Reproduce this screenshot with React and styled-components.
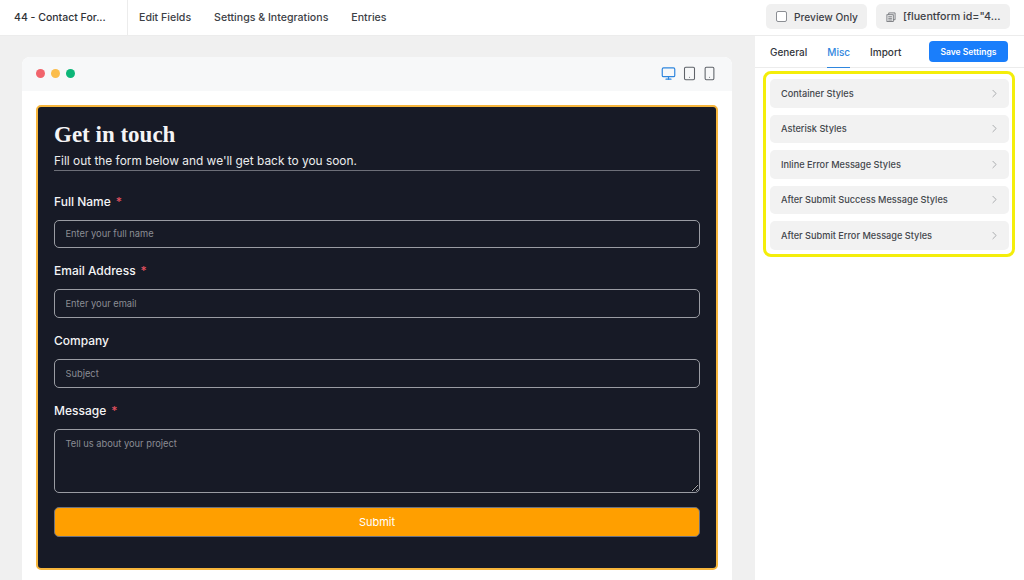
import React from "react";
import styled, { createGlobalStyle } from "styled-components";
import { ChevronRight, Monitor, Tablet, Smartphone } from "lucide-react";

const GlobalStyle = createGlobalStyle`
  html, body {
    margin: 0;
    padding: 0;
    height: 580px;
    overflow: hidden;
    background: #fff;
    font-family: Inter, "Liberation Sans", sans-serif;
  }
  * {
    box-sizing: border-box;
  }
`;

const Page = styled.div`
  width: 1024px;
  height: 580px;
  display: flex;
  flex-direction: column;
  overflow: hidden;
`;

const TopBar = styled.header`
  height: 36px;
  flex: none;
  display: flex;
  align-items: stretch;
  background: #fff;
  border-bottom: 1px solid #ececec;
`;

const FormName = styled.div`
  width: 128px;
  padding-left: 14px;
  display: flex;
  align-items: center;
  font-size: 10.5px;
  font-weight: 500;
  color: #2f3237;
  border-right: 1px solid #ececec;
`;

const NavLinks = styled.nav`
  display: flex;
  align-items: center;
  gap: 23px;
  padding-left: 11px;
  flex: 1;
`;

const NavLink = styled.span`
  font-size: 10.6px;
  font-weight: 500;
  color: #3d4146;
`;

const GreyButton = styled.div`
  height: 25px;
  width: ${(p) => p.$width}px;
  margin-right: ${(p) => p.$right}px;
  margin-top: 4px;
  display: flex;
  align-items: center;
  gap: 7px;
  padding-left: 10px;
  background: #f0f0f0;
  border-radius: 5px;
  font-size: ${(p) => p.$size}px;
  font-weight: 500;
  color: #3d4146;
`;

const Box = styled.span`
  width: 11px;
  height: 11px;
  background: #fff;
  border: 1px solid #8b8e93;
  border-radius: 2px;
`;

const Main = styled.div`
  flex: 1;
  display: flex;
  min-height: 0;
`;

const Canvas = styled.main`
  width: 755px;
  background: #f0f0f0;
  padding: 21px 23px 0 22px;
`;

const PreviewCard = styled.div`
  background: #fff;
  border-radius: 8px 8px 0 0;
  height: 540px;
`;

const WindowBar = styled.div`
  height: 34px;
  background: #f7f8f9;
  border-radius: 8px 8px 0 0;
  display: flex;
  align-items: center;
  justify-content: space-between;
  padding: 0 15px 2px 14px;
`;

const Dots = styled.div`
  display: flex;
  gap: 6px;
`;

const Dot = styled.span`
  width: 9px;
  height: 9px;
  border-radius: 50%;
  background: ${(p) => p.$color};
`;

const Devices = styled.div`
  display: flex;
  align-items: center;
  gap: 5.5px;
  color: #5f6369;
`;

const FormWrap = styled.div`
  padding: 14px;
`;

const FormBox = styled.form`
  height: 465px;
  background: #171a26;
  border: 2px solid #f7b63c;
  border-radius: 5px;
  padding: 14px 16px;
`;

const Title = styled.h1`
  margin: 0;
  font-family: "Liberation Serif", serif;
  font-size: 23px;
  line-height: 28px;
  font-weight: 700;
  color: #f4f4f5;
`;

const Subtitle = styled.p`
  margin: 0 0 21.5px;
  padding: 4px 0 1px;
  font-size: 11.9px;
  line-height: 16px;
  color: #eceded;
  border-bottom: 1.5px solid #6d6f78;
`;

const Field = styled.div`
  margin-bottom: 14.25px;
`;

const Label = styled.label`
  display: block;
  height: 18px;
  margin-bottom: 9px;
  font-size: 12px;
  line-height: 18px;
  font-weight: 500;
  color: #f4f4f5;
`;

const Star = styled.span`
  margin-left: 5px;
  color: #e0505f;
`;

const TextInput = styled.input`
  display: block;
  width: 100%;
  height: 28.5px;
  padding: 0 10.5px;
  background: transparent;
  border: 1px solid #9a9ca3;
  border-radius: 5px;
  font-family: inherit;
  font-size: 9.3px;
  color: #fff;
  outline: none;
  &::placeholder {
    color: #8b8d94;
    opacity: 1;
  }
`;

const TextArea = styled.textarea`
  display: block;
  width: 100%;
  height: 64px;
  padding: 8px 10.5px;
  background: transparent;
  border: 1px solid #9a9ca3;
  border-radius: 5px;
  font-family: inherit;
  font-size: 9.3px;
  color: #fff;
  outline: none;
  &::placeholder {
    color: #8b8d94;
    opacity: 1;
  }
`;

const Submit = styled.button`
  display: block;
  width: 100%;
  height: 30px;
  background: #ff9f00;
  border: 1px solid #6d7280;
  border-radius: 5px;
  font-family: inherit;
  font-size: 11px;
  color: #fff;
`;

const Sidebar = styled.aside`
  flex: 1;
  background: #fff;
`;

const SideTabs = styled.div`
  height: 32px;
  display: flex;
  align-items: stretch;
  padding: 0 16px 0 15px;
  border-bottom: 1px solid #ececec;
`;

const SideTab = styled.span`
  display: flex;
  align-items: center;
  margin-right: 20px;
  margin-bottom: -1px;
  font-size: 10px;
  font-weight: 500;
  color: ${(p) => (p.$active ? "#2f86de" : "#33363b")};
  border-bottom: 1.5px solid ${(p) => (p.$active ? "#2f86de" : "transparent")};
`;

const SaveButton = styled.button`
  width: 79px;
  height: 21px;
  margin: 5px 0 0 auto;
  padding: 0;
  background: #1a7efb;
  border: none;
  border-radius: 4px;
  font-family: inherit;
  font-size: 8.5px;
  font-weight: 600;
  color: #fff;
`;

const Highlight = styled.div`
  width: 252px;
  margin: 3px 0 0 8px;
  padding: 5px 3.5px 4.5px;
  display: flex;
  flex-direction: column;
  gap: 7px;
  border: 3.5px solid #f4ee0a;
  border-radius: 8px;
`;

const StyleRow = styled.div`
  height: 28.5px;
  display: flex;
  align-items: center;
  justify-content: space-between;
  padding: 0 7.5px 0 11.5px;
  background: #f2f2f2;
  border-radius: 5px;
  font-size: 9.2px;
  font-weight: 500;
  color: #44474c;
`;

const styleGroups = [
  "Container Styles",
  "Asterisk Styles",
  "Inline Error Message Styles",
  "After Submit Success Message Styles",
  "After Submit Error Message Styles",
];

const CopyIcon = () => (
  <svg width="10" height="10" viewBox="0 0 11 11" fill="none" stroke="#6a6d72" strokeWidth="0.9">
    <rect x="1" y="3" width="7" height="7.5" />
    <path d="M3 3V1h7v7.5H8M2.5 5.2h4M2.5 7h4M2.5 8.8h4" />
  </svg>
);

const App = () => (
  <Page>
    <GlobalStyle />
    <TopBar>
      <FormName>44 - Contact For...</FormName>
      <NavLinks>
        <NavLink>Edit Fields</NavLink>
        <NavLink>Settings &amp; Integrations</NavLink>
        <NavLink>Entries</NavLink>
      </NavLinks>
      <GreyButton $width={101} $right={9} $size={10.2}>
        <Box />
        Preview Only
      </GreyButton>
      <GreyButton $width={134} $right={14} $size={10.7}>
        <CopyIcon />
        [fluentform id="4...
      </GreyButton>
    </TopBar>
    <Main>
      <Canvas>
        <PreviewCard>
          <WindowBar>
            <Dots>
              <Dot $color="#f1646c" />
              <Dot $color="#fbbd4c" />
              <Dot $color="#0cb678" />
            </Dots>
            <Devices>
              <Monitor size={15} color="#2f86de" strokeWidth={1.9} />
              <Tablet size={15} strokeWidth={1.7} />
              <Smartphone size={15} strokeWidth={1.7} />
            </Devices>
          </WindowBar>
          <FormWrap>
            <FormBox>
              <Title>Get in touch</Title>
              <Subtitle>Fill out the form below and we'll get back to you soon.</Subtitle>
              <Field>
                <Label>
                  Full Name<Star>*</Star>
                </Label>
                <TextInput placeholder="Enter your full name" />
              </Field>
              <Field>
                <Label>
                  Email Address<Star>*</Star>
                </Label>
                <TextInput placeholder="Enter your email" />
              </Field>
              <Field>
                <Label>Company</Label>
                <TextInput placeholder="Subject" />
              </Field>
              <Field>
                <Label>
                  Message<Star>*</Star>
                </Label>
                <TextArea placeholder="Tell us about your project" />
              </Field>
              <Submit type="button">Submit</Submit>
            </FormBox>
          </FormWrap>
        </PreviewCard>
      </Canvas>
      <Sidebar>
        <SideTabs>
          <SideTab>General</SideTab>
          <SideTab $active>Misc</SideTab>
          <SideTab>Import</SideTab>
          <SaveButton type="button">Save Settings</SaveButton>
        </SideTabs>
        <Highlight>
          {styleGroups.map((name) => (
            <StyleRow key={name}>
              {name}
              <ChevronRight size={13} color="#85888d" strokeWidth={1.2} />
            </StyleRow>
          ))}
        </Highlight>
      </Sidebar>
    </Main>
  </Page>
);

export default App;
